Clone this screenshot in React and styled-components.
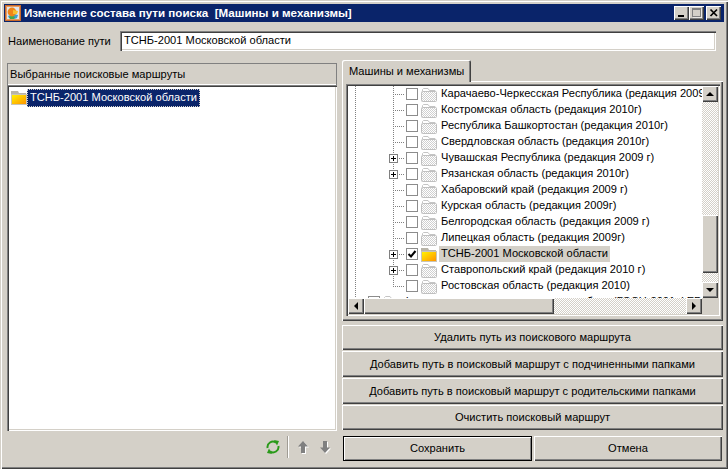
import React from "react";
import styled, { createGlobalStyle } from "styled-components";

const Global = createGlobalStyle`
  html, body { margin: 0; padding: 0; background: #d4d0c8; }
  * { box-sizing: border-box; }
`;

const raised = `box-shadow: inset 1px 1px 0 #fff, inset -1px -1px 0 #404040, inset -2px -2px 0 #808080;`;
const sunken = `box-shadow: inset 1px 1px 0 #808080, inset 2px 2px 0 #404040, inset -1px -1px 0 #fff, inset -2px -2px 0 #d4d0c8;`;
const checker = `background-color: #fff; background-image: conic-gradient(#d4d0c8 25%, #fff 0 50%, #d4d0c8 0 75%, #fff 0); background-size: 2px 2px;`;

const Frame = styled.div`
  width: 728px; height: 469px; padding: 4px; overflow: hidden;
  display: flex; flex-direction: column;
  background: #d4d0c8;
  font: 11.1px/13px "Liberation Sans", Arial, sans-serif;
  color: #000;
  box-shadow: inset 1px 1px 0 #d4d0c8, inset 2px 2px 0 #fff, inset -1px -1px 0 #404040, inset -2px -2px 0 #808080;
`;
const TitleBar = styled.div`
  height: 18px; flex: none; background: #0a246a; color: #fff;
  display: flex; align-items: center; padding: 0 3px 0 1px;
`;
const TitleText = styled.div`
  margin-left: 3px; font: bold 11.6px/16px "Liberation Sans", sans-serif; white-space: pre;
  flex: 1;
`;
const CaptionButton = styled.button`
  width: 15px; height: 14px; padding: 0; border: 0; background: #d4d0c8; margin-left: ${p => p.$gap || 0}px;
  display: flex; align-items: center; justify-content: center;
  ${raised}
`;
const Content = styled.div`
  flex: 1; min-height: 0; display: flex; flex-direction: column;
`;
const NameRow = styled.div`
  display: flex; align-items: center; height: 20px; margin-top: 9px; padding-left: 4px;
`;
const NameLabel = styled.label` width: 112px; flex: none; white-space: nowrap; `;
const NameInput = styled.div`
  width: 596px; height: 20px; background: #fff; padding: 3px 4px; ${sunken}
`;
const Main = styled.div`
  flex: 1; min-height: 0; display: grid; grid-template-columns: 330px 381px; column-gap: 5px;
  padding-left: 3px; margin-top: 9px;
`;
const LeftCol = styled.div` display: flex; flex-direction: column; padding-top: 3px; `;
const PanelHeader = styled.div`
  height: 22px; padding: 5px 3px; flex: none;
  box-shadow: inset 1px 1px 0 #808080, inset -1px 0 0 #808080, inset 0 -1px 0 #fff;
`;
const RouteList = styled.div`
  height: 346px; flex: none; background: #fff; padding: 4px; ${sunken}
`;
const RouteItem = styled.div` display: flex; align-items: center; height: 18px; `;
const SelectedText = styled.span`
  background: #0a246a; color: #fff; padding: 2px 3px; height: 18px;
  outline: 1px dotted #d4d0c8; outline-offset: -1px; width: 173px; white-space: nowrap;
`;
const Toolbar = styled.div`
  height: 32px; flex: none; display: flex; align-items: center; justify-content: flex-end; padding-right: 6px;
`;
const ToolDivider = styled.div`
  width: 2px; height: 22px; margin: 0 8px 0 7px;
  background: linear-gradient(90deg, #a09c94 50%, #fff 50%);
`;
const ToolIcon = styled.span` display: flex; margin-left: ${p => p.$ml || 0}px; `;
const RightCol = styled.div` display: flex; flex-direction: column; `;
const TabStrip = styled.div` height: 22px; flex: none; display: flex; align-items: flex-end; `;
const Tab = styled.div`
  width: 129px; height: 22px; padding: 5px 7px; white-space: nowrap; position: relative; z-index: 1;
  border-radius: 2px 2px 0 0; background: #d4d0c8;
  box-shadow: inset 1px 1px 0 #fff, inset -1px 0 0 #404040, inset -2px 0 0 #808080;
`;
const TabPanel = styled.div`
  height: 240px; flex: none; padding: 3px 3px 5px 4px; margin-top: -1px;
  ${raised}
`;
const TreeBox = styled.div`
  height: 232px; width: 374px; padding: 2px; display: grid; grid-template-columns: 354px 16px; grid-template-rows: 212px 16px; background: #fff; ${sunken}
`;
const TreeBody = styled.div` overflow: hidden; background: #fff; `;
const Row = styled.div`
  height: 16px; display: flex; align-items: center; white-space: nowrap;
`;
const Indent = styled.span`
  width: 37px; height: 16px; flex: none;
  background: repeating-linear-gradient(180deg, #808080 0 1px, transparent 1px 2px) 7px 0 / 1px 100% no-repeat;
`;
const Branch = styled.span`
  width: 20px; height: 16px; flex: none; display: flex; align-items: center;
  background:
    repeating-linear-gradient(90deg, #808080 0 1px, transparent 1px 2px) 8px 8px / 12px 1px no-repeat,
    repeating-linear-gradient(180deg, #808080 0 1px, transparent 1px 2px) 8px 0 / 1px ${p => (p.$last ? "8px" : "100%")} no-repeat;
`;
const LeadBranch = styled(Branch)` margin-left: -1px; `;
const Expander = styled.span`
  width: 9px; height: 9px; margin-left: 4px; background: #fff; border: 1px solid #808080; position: relative;
  &::before { content: ""; position: absolute; left: 1px; top: 3px; width: 5px; height: 1px; background: #000; }
  &::after { content: ""; position: absolute; left: 3px; top: 1px; width: 1px; height: 5px; background: #000; }
`;
const Check = styled.span`
  width: 12px; height: 12px; flex: none; margin-left: 1px; background: #fff; border: 1px solid #8c8c8c;
  display: flex; align-items: center; justify-content: center;
`;
const FolderSlot = styled.span` width: 16px; height: 15px; margin-left: 3px; flex: none; display: flex; `;
const RouteFolder = styled.span` width: 16px; height: 16px; flex: none; display: flex; `;
const RowText = styled.span`
  margin-left: 2px; padding: 0 2px; height: 16px; line-height: 15px;
  background: ${p => (p.$current ? "#d4d0c8" : "transparent")};
`;
const ScrollV = styled.div` display: flex; flex-direction: column; ${checker} `;
const ScrollH = styled.div` display: flex; ${checker} `;
const ScrollBtn = styled.div`
  width: 16px; height: 16px; flex: none; background: #d4d0c8; display: flex; align-items: center; justify-content: center;
  ${raised}
`;
const ThumbV = styled.div` width: 16px; height: 58px; margin-top: 113px; background: #d4d0c8; ${raised} `;
const ThumbH = styled.div` height: 16px; width: 190px; flex: none; background: #d4d0c8; ${raised} `;
const Filler = styled.div` flex: 1; `;
const Corner = styled.div` background: #d4d0c8; `;
const ActionList = styled.div` display: flex; flex-direction: column; gap: 1px; margin-top: 4px; `;
const ActionButton = styled.button`
  height: ${p => p.$h || 25}px; border: 0; background: #d4d0c8; padding: 0; font: 11.1px/13px "Liberation Sans", sans-serif; color: #000; ${raised}
`;
const Footer = styled.div` display: flex; gap: 2px; margin-top: 6px; padding-left: 1px; `;
const SaveButton = styled(ActionButton)`
  width: 189px; box-shadow: inset 0 0 0 1px #000, inset 2px 2px 0 #fff, inset -2px -2px 0 #808080;
`;
const CancelButton = styled(ActionButton)` width: 188px; `;

const YellowFolder = () => (
  <svg width="16" height="15" viewBox="0 0 16 15">
    <defs>
      <linearGradient id="fy" x1="0" y1="0" x2="1" y2="1">
        <stop offset="0" stopColor="#fff200" />
        <stop offset="1" stopColor="#ff9400" />
      </linearGradient>
    </defs>
    <path d="M0 1 H7 L8 3 H15 V5 H0Z" fill="#b8b4a8" />
    <rect x="0" y="4" width="16" height="11" fill="#c8c4b8" />
    <rect x="1" y="5" width="14" height="9" fill="url(#fy)" />
  </svg>
);

const GrayFolder = () => (
  <svg width="16" height="15" viewBox="0 0 16 15">
    <defs>
      <pattern id="fd" width="2" height="2" patternUnits="userSpaceOnUse">
        <rect width="2" height="2" fill="#fff" />
        <rect width="1" height="1" fill="#d0d0d0" />
        <rect x="1" y="1" width="1" height="1" fill="#d0d0d0" />
      </pattern>
    </defs>
    <path d="M1.5 4 V2.5 L2.5 1.5 H7 L8.5 3.5 H14 V4" fill="#fff" stroke="#c4c4c4" strokeWidth="1" />
    <rect x="0.5" y="4.5" width="15" height="10" rx="1" fill="url(#fd)" stroke="#c0c0c0" strokeWidth="1" />
  </svg>
);

const Arrow = ({ dir }) => {
  const p = {
    up: "M4 0 L8 4 H0Z",
    down: "M0 0 H8 L4 4Z",
    left: "M4 0 V8 L0 4Z",
    right: "M0 0 L4 4 L0 8Z",
  }[dir];
  const vertical = dir === "up" || dir === "down";
  return (
    <svg width={vertical ? 8 : 4} height={vertical ? 4 : 8} viewBox={vertical ? "0 0 8 4" : "0 0 4 8"}>
      <path d={p} fill="#000" />
    </svg>
  );
};

const rows = [
  { t: "Карачаево-Черкесская Республика (редакция 2009 г)" },
  { t: "Костромская область (редакция 2010г)" },
  { t: "Республика Башкортостан (редакция 2010г)" },
  { t: "Свердловская область (редакция 2010г)" },
  { t: "Чувашская Республика (редакция 2009 г)", plus: true },
  { t: "Рязанская область (редакция 2010г)", plus: true },
  { t: "Хабаровский край (редакция 2009 г)" },
  { t: "Курская область (редакция 2009г)" },
  { t: "Белгородская область (редакция 2009 г)" },
  { t: "Липецкая область (редакция 2009г)" },
  { t: "ТСНБ-2001 Московской области", plus: true, on: true },
  { t: "Ставропольский край (редакция 2010 г)", plus: true },
  { t: "Ростовская область (редакция 2010)", last: true },
];

const actions = [
  { t: "Удалить путь из поискового маршрута", h: 25 },
  { t: "Добавить путь в поисковый маршрут с подчиненными папками", h: 26 },
  { t: "Добавить путь в поисковый маршрут с родительскими папками", h: 26 },
  { t: "Очистить поисковый маршрут", h: 25 },
];

export default function App() {
  return (
    <Frame>
      <Global />
      <TitleBar>
        <svg width="16" height="16" viewBox="0 0 16 16">
          <rect x="0.5" y="0.5" width="15" height="15" fill="#dfe6ee" stroke="#c8682a" />
          <rect x="1.5" y="1.5" width="13" height="13" fill="none" stroke="#e89a60" />
          <path d="M3 11 Q8 8 13 10 L12 13 Q8 15 4 13Z" fill="#3f9fd0" />
          <path d="M4 12 Q7 10 10 12 L9 14 H5Z" fill="#47a84a" />
          <circle cx="7" cy="7" r="4.4" fill="#f08418" />
          <path d="M8 5 L13 6 L12 9 L8 9Z" fill="#f8c030" />
        </svg>
        <TitleText>Изменение состава пути поиска  [Машины и механизмы]</TitleText>
        <CaptionButton aria-label="Свернуть">
          <svg width="10" height="10" viewBox="0 0 10 10"><rect x="1" y="7" width="6" height="2" fill="#000" /></svg>
        </CaptionButton>
        <CaptionButton aria-label="Развернуть">
          <svg width="10" height="10" viewBox="0 0 10 10"><path d="M0 0 H9 V9 H0Z M1 2 V8 H8 V2Z" fill="#808080" fillRule="evenodd" /><path d="M10 1 V10 H1" fill="none" stroke="#fff" /></svg>
        </CaptionButton>
        <CaptionButton aria-label="Закрыть" $gap={2}>
          <svg width="10" height="10" viewBox="0 0 10 10"><path d="M1.5 1.5 L8 8 M8 1.5 L1.5 8" stroke="#000" strokeWidth="1.7" /></svg>
        </CaptionButton>
      </TitleBar>
      <Content>
        <NameRow>
          <NameLabel>Наименование пути</NameLabel>
          <NameInput>ТСНБ-2001 Московской области</NameInput>
        </NameRow>
        <Main>
          <LeftCol>
            <PanelHeader>Выбранные поисковые маршруты</PanelHeader>
            <RouteList>
              <RouteItem>
                <RouteFolder><YellowFolder /></RouteFolder>
                <SelectedText>ТСНБ-2001 Московской области</SelectedText>
              </RouteItem>
            </RouteList>
            <Toolbar>
              <ToolIcon>
                <svg width="14" height="14" viewBox="0 0 14 14" fill="none" stroke="#2a9a1a" strokeWidth="2">
                  <path d="M1.6 8 A5.4 5.4 0 0 1 10 2.6" />
                  <path d="M12.4 6 A5.4 5.4 0 0 1 4 11.4" />
                  <path d="M8 0 L13 1 L11 5.5Z" fill="#2a9a1a" stroke="none" />
                  <path d="M6 14 L1 13 L3 8.5Z" fill="#2a9a1a" stroke="none" />
                </svg>
              </ToolIcon>
              <ToolDivider />
              <ToolIcon>
                <svg width="12" height="14" viewBox="0 0 12 14">
                  <path d="M7 2 L12 7.5 H9 V14 H5 V7.5 H2Z" fill="#fff" />
                  <path d="M6 1 L11 6.5 H8 V13 H4 V6.5 H1Z" fill="#808080" />
                </svg>
              </ToolIcon>
              <ToolIcon $ml={10}>
                <svg width="12" height="14" viewBox="0 0 12 14">
                  <path d="M5 2 H9 V8.5 H12 L7 14 L2 8.5 H5Z" fill="#fff" />
                  <path d="M4 1 H8 V7.5 H11 L6 13 L1 7.5 H4Z" fill="#808080" />
                </svg>
              </ToolIcon>
            </Toolbar>
          </LeftCol>
          <RightCol>
            <TabStrip><Tab>Машины и механизмы</Tab></TabStrip>
            <TabPanel>
              <TreeBox>
                <TreeBody>
                  {rows.map((r) => (
                    <Row key={r.t}>
                      <Indent />
                      <Branch $last={r.last}>{r.plus && <Expander />}</Branch>
                      <Check>
                        {r.on && (
                          <svg width="10" height="10" viewBox="0 0 10 10">
                            <path d="M1.5 5 L4 7.5 L8.5 2" fill="none" stroke="#000" strokeWidth="2" />
                          </svg>
                        )}
                      </Check>
                      <FolderSlot>{r.on ? <YellowFolder /> : <GrayFolder />}</FolderSlot>
                      <RowText $current={r.on}>{r.t}</RowText>
                    </Row>
                  ))}
                  <Row>
                    <LeadBranch />
                    <Check />
                    <FolderSlot><GrayFolder /></FolderSlot>
                    <RowText>Федеральная сметно-нормативная база (ГЭСН-2001 ФЕР-2001)</RowText>
                  </Row>
                </TreeBody>
                <ScrollV>
                  <ScrollBtn><Arrow dir="up" /></ScrollBtn>
                  <ThumbV />
                  <Filler />
                  <ScrollBtn><Arrow dir="down" /></ScrollBtn>
                </ScrollV>
                <ScrollH>
                  <ScrollBtn><Arrow dir="left" /></ScrollBtn>
                  <ThumbH />
                  <Filler />
                  <ScrollBtn><Arrow dir="right" /></ScrollBtn>
                </ScrollH>
                <Corner />
              </TreeBox>
            </TabPanel>
            <ActionList>
              {actions.map((a) => <ActionButton key={a.t} $h={a.h}>{a.t}</ActionButton>)}
            </ActionList>
            <Footer>
              <SaveButton $h={25}>Сохранить</SaveButton>
              <CancelButton $h={25}>Отмена</CancelButton>
            </Footer>
          </RightCol>
        </Main>
      </Content>
    </Frame>
  );
}
